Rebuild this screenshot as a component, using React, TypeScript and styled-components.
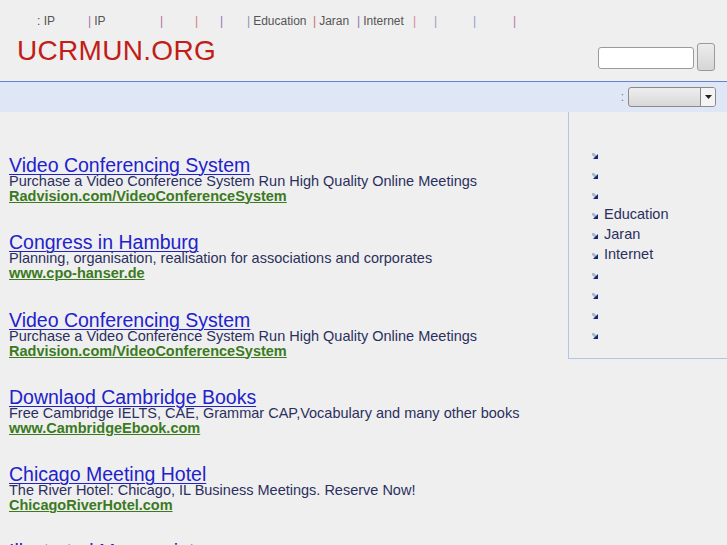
import styled, {createGlobalStyle} from 'styled-components'

const GlobalStyle = createGlobalStyle`
  html, body {
    margin: 0;
    padding: 0;
    background: #efefef;
    font-family: "Liberation Sans", Arial, sans-serif;
  }
`

const Page = styled.div`
  width: 727px;
  height: 545px;
  overflow: hidden;
  background: #efefef;
`

const Nav = styled.div`
  display: flex;
  padding: 14px 0 0 37px;
  height: 14px;
  font-size: 12px;
  line-height: 14px;
  color: #555;
  white-space: nowrap;
`

const NavItem = styled.div<{$w: number}>`
  width: ${(p) => p.$w}px;
  flex: none;
`

const Sep = styled.span<{$c: string}>`
  color: ${(p) => p.$c};
  margin-right: 3px;
`

const LogoRow = styled.div`
  display: flex;
  justify-content: space-between;
  align-items: flex-start;
  height: 48px;
  margin-top: 5px;
  padding: 0 12px 0 17px;
  border-bottom: 1px solid #6482d2;
`

const Logo = styled.div`
  font-size: 28px;
  line-height: 32px;
  margin-top: 2px;
  color: #c21d17;
  letter-spacing: 0.3px;
`

const Search = styled.form`
  display: flex;
  align-items: flex-start;
  gap: 3px;
  margin-top: 10px;
`

const SearchInput = styled.div`
  width: 94px;
  height: 20px;
  margin-top: 4px;
  background: #fff;
  border: 1px solid #9a9a9a;
  border-radius: 3px;
`

const SearchButton = styled.div`
  width: 16px;
  height: 26px;
  background: linear-gradient(#ececec, #d6d6d6);
  border: 1px solid #9a9a9a;
  border-radius: 3px;
`

const SubBar = styled.div`
  display: flex;
  justify-content: flex-end;
  align-items: center;
  gap: 4px;
  height: 30px;
  padding-right: 11px;
  background: #dfe6f5;
  font-size: 12px;
  color: #777;
`

const Select = styled.div`
  display: flex;
  width: 86px;
  height: 18px;
  border: 1px solid #8a8a8a;
  border-radius: 3px;
  background: linear-gradient(#eeeeee, #d8d8d8);
  overflow: hidden;
`

const SelectBody = styled.div`
  flex: 1;
`

const SelectArrow = styled.div`
  width: 14px;
  border-left: 1px solid #8a8a8a;
  display: flex;
  align-items: center;
  justify-content: center;
  background: #f4f4f4;
`

const Main = styled.div`
  display: grid;
  grid-template-columns: 1fr 159px;
  align-items: start;
`

const Content = styled.div`
  padding: 44px 0 0 9px;
`

const Ad = styled.div`
  margin-bottom: 29.25px;
`

const AdTitle = styled.a`
  display: block;
  font-size: 19.5px;
  line-height: 18px;
  color: #2222cc;
  text-decoration: underline;
  text-decoration-thickness: 1px;
  text-underline-offset: 2px;
`

const AdText = styled.div`
  font-size: 14.5px;
  line-height: 15px;
  color: #2b2f5e;
`

const AdUrl = styled.a`
  display: block;
  font-size: 14.5px;
  line-height: 15px;
  font-weight: bold;
  color: #3b7a1e;
  text-decoration: underline;
  text-decoration-thickness: 1px;
`

const Sidebar = styled.div`
  height: 247px;
  border-left: 1px solid #b1c6e6;
  border-bottom: 1px solid #b1c6e6;
  padding-top: 32px;
  box-sizing: border-box;
`

const SideList = styled.ul`
  list-style: none;
  margin: 0;
  padding: 0 0 0 23px;
`

const SideItem = styled.li`
  display: flex;
  align-items: center;
  gap: 6px;
  height: 20px;
  font-size: 14.5px;
  color: #2b2f5e;
`

const BulletIcon = styled.svg`
  flex: none;
  margin-top: 3px;
`

const Bullet = () => (
  <BulletIcon width="6" height="6" viewBox="0 0 6 6">
    <path d="M0 0 L2 0 L6 4 L6 6 L4 6 L0 2 Z" fill="#a9b6d4" />
    <path d="M6 1 L6 6 L1 6 Z" fill="#14286e" />
  </BulletIcon>
)

const navItems = [
  {label: ': IP', w: 51, c: ''},
  {label: 'IP', w: 72, c: '#a672b4'},
  {label: '', w: 35, c: '#b070a8'},
  {label: '', w: 25, c: '#d07c8c'},
  {label: '', w: 27, c: '#a070b0'},
  {label: 'Education', w: 66, c: '#8892b8'},
  {label: 'Jaran', w: 44, c: '#d06a74'},
  {label: 'Internet', w: 56, c: '#8a74b4'},
  {label: '', w: 21, c: '#d88898'},
  {label: '', w: 39, c: '#98a0bc'},
  {label: '', w: 40, c: '#8ea0c8'},
  {label: '', w: 20, c: '#b078b0'},
]

const ads = [
  {
    title: 'Video Conferencing System',
    text: 'Purchase a Video Conference System Run High Quality Online Meetings',
    url: 'Radvision.com/VideoConferenceSystem',
  },
  {
    title: 'Congress in Hamburg',
    text: 'Planning, organisation, realisation for associations and corporates',
    url: 'www.cpo-hanser.de',
  },
  {
    title: 'Video Conferencing System',
    text: 'Purchase a Video Conference System Run High Quality Online Meetings',
    url: 'Radvision.com/VideoConferenceSystem',
  },
  {
    title: 'Downlaod Cambridge Books',
    text: 'Free Cambridge IELTS, CAE, Grammar CAP,Vocabulary and many other books',
    url: 'www.CambridgeEbook.com',
  },
  {
    title: 'Chicago Meeting Hotel',
    text: 'The River Hotel: Chicago, IL Business Meetings. Reserve Now!',
    url: 'ChicagoRiverHotel.com',
  },
  {
    title: 'Illustrated Manuscripts',
    text: 'Rare books and illuminated manuscripts from private collections',
    url: 'www.manuscripts.com',
  },
]

const sideItems = ['', '', '', 'Education', 'Jaran', 'Internet', '', '', '', '']

export default function App() {
  return (
    <Page>
      <GlobalStyle />
      <Nav>
        {navItems.map((item, i) => (
          <NavItem key={i} $w={item.w}>
            {item.c && <Sep $c={item.c}>|</Sep>}
            {item.label}
          </NavItem>
        ))}
      </Nav>
      <LogoRow>
        <Logo>UCRMUN.ORG</Logo>
        <Search>
          <SearchInput />
          <SearchButton />
        </Search>
      </LogoRow>
      <SubBar>
        <span>:</span>
        <Select>
          <SelectBody />
          <SelectArrow>
            <svg width="7" height="4" viewBox="0 0 7 4">
              <path d="M0 0 H7 L3.5 4 Z" fill="#222" />
            </svg>
          </SelectArrow>
        </Select>
      </SubBar>
      <Main>
        <Content>
          {ads.map((ad, i) => (
            <Ad key={i}>
              <AdTitle href="#">{ad.title}</AdTitle>
              <AdText>{ad.text}</AdText>
              <AdUrl href="#">{ad.url}</AdUrl>
            </Ad>
          ))}
        </Content>
        <Sidebar>
          <SideList>
            {sideItems.map((s, i) => (
              <SideItem key={i}>
                <Bullet />
                {s}
              </SideItem>
            ))}
          </SideList>
        </Sidebar>
      </Main>
    </Page>
  )
}
